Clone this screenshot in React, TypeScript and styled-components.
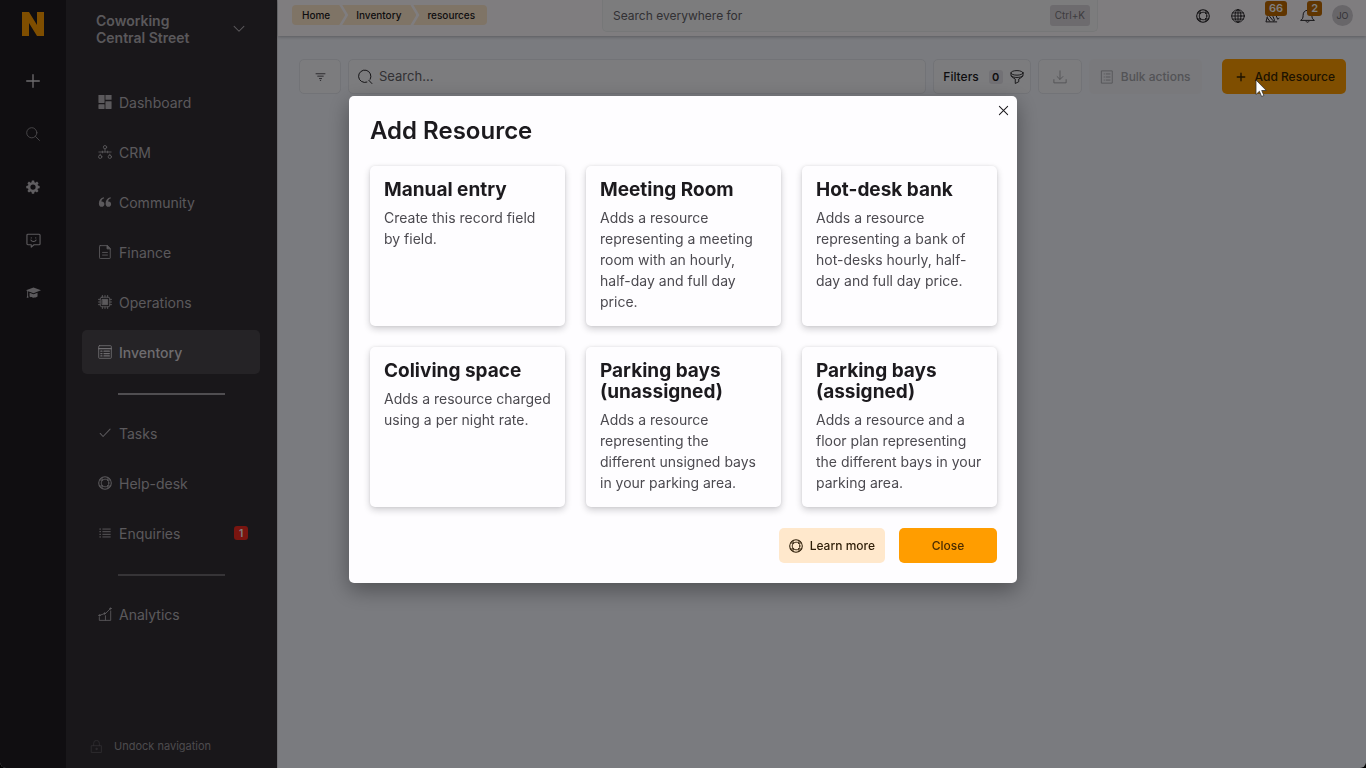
import React from "react";
import styled, { createGlobalStyle } from "styled-components";

const GlobalStyle = createGlobalStyle`
  *, *::before, *::after { box-sizing: border-box; }
  body {
    margin: 0;
    background: #000;
    color: #1c1a1e;
    font-family: Inter, "Liberation Sans", sans-serif;
    font-size: 14px;
    line-height: 21px;
  }
  button, input { font: inherit; color: inherit; }
  button { cursor: pointer; border: 0; background: none; padding: 0; }
  a { color: inherit; text-decoration: none; }
  ul, ol { list-style: none; margin: 0; padding: 0; }
  h1, h2, p { margin: 0; }
`;

/* ---------- icons ---------- */

const Svg = styled.svg<{ $size?: number }>`
  display: block;
  flex: none;
  width: ${(p) => p.$size ?? 14}px;
  height: ${(p) => p.$size ?? 14}px;
  fill: none;
  stroke: currentColor;
  stroke-width: 1;
  stroke-linecap: round;
  stroke-linejoin: round;
`;

type IconProps = { size?: number };

const icon = (children: React.ReactNode, defaultSize = 14) =>
  function Icon({ size = defaultSize }: IconProps) {
    return (
      <Svg viewBox="0 0 16 16" $size={size} aria-hidden="true">
        {children}
      </Svg>
    );
  };

const PlusIcon = icon(<path d="M8 .8v14.4M.8 8h14.4" strokeWidth="1.5" />);
const SearchIcon = icon(
  <>
    <circle cx="6.6" cy="6.6" r="5.8" />
    <path d="M10.8 10.8l4.6 4.6" />
  </>
);
const GearIcon = icon(
  <path
    fill="currentColor"
    stroke="none"
    fillRule="evenodd"
    d="M6.7.5h2.6l.4 2 1.1.5 1.8-1.2 1.8 1.8L13.200 5.300l.5 1.100 1.900.400v2.500l-2 .4-.5 1.100 1.200 1.800-1.800 1.800-1.700-1.200-1.100.5-.4 1.900H6.700l-.4-1.900-1.100-.5-1.800 1.200-1.800-1.800 1.200-1.800-.5-1.100-2-.4V6.800l2-.4.5-1.100L1.600 3.600l1.800-1.800L5.200 3l1.100-.5zM8 5a3 3 0 1 0 0 6 3 3 0 0 0 0-6z"
  />
);
const FeedbackIcon = icon(
  <>
    <path d="M2 1.300h12a1 1 0 0 1 1 1v9.200a1 1 0 0 1-1 1H8.500L5.600 15v-2.500H2a1 1 0 0 1-1-1V2.300a1 1 0 0 1 1-1z" strokeWidth="1.200" />
    <path d="M5.300 7.600c.9 1.900 4.500 1.900 5.400 0M5.600 5v.3M10.400 5v.3" strokeWidth="1.200" />
  </>,
  15
);
const CapIcon = icon(
  <>
    <path fill="currentColor" stroke="none" d="M8 1.500l8 3-8 3.200L2.200 5.600v4.600l.5 2.300H.7l.6-2.300V5.100L0 4.500z" />
    <path fill="currentColor" stroke="none" d="M3.800 7.200L8 8.800l4.300-1.700v4.200c-2.300 1.700-6.300 1.700-8.500 0z" />
  </>,
  15
);
const ChevronIcon = icon(<path d="M1.500 4.500L8 11l6.500-6.500" strokeWidth="1.400" />, 12);
const DashboardIcon = icon(
  <g fill="currentColor" stroke="none">
    <rect x="0.500" y="0" width="7" height="9" rx=".5" />
    <rect x="8.500" y="0" width="7" height="5.500" rx=".5" />
    <rect x="0.500" y="10.500" width="7" height="5.500" rx=".5" />
    <rect x="8.500" y="7" width="7" height="9" rx=".5" />
  </g>
);
const CrmIcon = icon(
  <>
    <circle cx="8" cy="2.500" r="1.900" />
    <circle cx="2.500" cy="13.500" r="1.900" />
    <circle cx="13.500" cy="13.500" r="1.900" />
    <path d="M8 4.500V8M1 8h14M5 7v2M11 7v2M2.500 10.500v1M13.500 10.500v1" />
  </>
);
const QuoteIcon = icon(
  <g fill="currentColor" stroke="none">
    <path d="M6.600 2.600C3 3.400 1 6.200 1 9.600 1 12 2.300 13.500 4.200 13.500S7.300 12.200 7.300 10.500 6.100 7.500 4.400 7.500h-.6C4 5.800 5 4.500 7.100 3.700z" />
    <path d="M14.300 2.600c-3.600.8-5.600 3.600-5.600 7 0 2.400 1.300 3.900 3.200 3.900s3.100-1.300 3.100-3-1.200-3-2.900-3h-.6c.2-1.700 1.200-3 3.300-3.800z" />
  </g>
);
const FinanceIcon = icon(
  <>
    <path d="M2.500.7h7.800l3.700 3.700v10.400a.6.600 0 0 1-.6.600H2.500a.8.800 0 0 1-.8-.8V1.500a.8.800 0 0 1 .8-.8zM5.200 8.500h5.600M5.200 11.500h5.600" />
    <path fill="currentColor" d="M10.300.7v3.700H14z" />
  </>
);
const ChipIcon = icon(
  <>
    <rect x="2.500" y="2.500" width="11" height="11" rx="2" />
    <rect x="5" y="5" width="6" height="6" fill="currentColor" />
    <path d="M5 .5v2M8 .5v2M11 .5v2M5 13.500v2M8 13.500v2M11 13.500v2M.5 5h2M.5 8h2M.5 11h2M13.500 5h2M13.500 8h2M13.500 11h2" />
  </>
);
const InventoryIcon = icon(
  <>
    <rect x=".8" y=".8" width="14.400" height="14.400" rx=".8" />
    <path d="M.8 4.200h14.400M3.200 7h1.400M6.800 7h6.200M3.200 9.800h1.400M6.800 9.800h6.200M3.200 12.500h1.400M6.800 12.500h6.200" strokeWidth="1.300" />
  </>
);
const CheckIcon = icon(<path d="M2.500 8.500l3.300 3.500 8-8.500" strokeWidth="1.200" />);
const LifebuoyIcon = icon(
  <>
    <circle cx="8" cy="8" r="7.200" strokeWidth="1.200" />
    <circle cx="8" cy="8" r="4.400" />
    <path d="M2.300 4.500l2.700.3M4.500 2.300l.4 2.700M13.700 4.500l-2.700.3M11.500 2.300L11.100 5M2.300 11.500l2.700-.3M4.500 13.700l.4-2.700M13.700 11.500l-2.700-.3M11.500 13.700l-.4-2.700" />
  </>
);
const ListIcon = icon(
  <path d="M2 3.500h1M5.500 3.500H14M2 6.500h1M5.500 6.500H14M2 9.500h1M5.500 9.500H14M2 12.500h1M5.500 12.500H14" strokeWidth="1.100" />
);
const AnalyticsIcon = icon(
  <>
    <path d="M1.500 12v3.300h13V4.500M1.500 9.500l5-1.500 2.500-1 5-5M8.500 10v5" />
    <g fill="currentColor">
      <circle cx="1.600" cy="9.700" r=".8" />
      <circle cx="7.500" cy="7.400" r=".8" />
      <circle cx="14.200" cy="1.800" r=".8" />
    </g>
  </>
);
const LockIcon = icon(
  <>
    <path d="M2 7h12v8.300H2zM4.500 7V4a3.500 3.500 0 0 1 7 0v3" />
    <circle cx="8" cy="11" r=".9" fill="currentColor" />
  </>
);
const GlobeIcon = icon(
  <>
    <circle cx="8" cy="8" r="7.200" />
    <ellipse cx="8" cy="8" rx="3.400" ry="7.200" />
    <path d="M8 .8v14.400M.8 8h14.400M1.700 4.500h12.600M1.700 11.500h12.600" />
  </>
);
const PartyIcon = icon(
  <path d="M2.500 9.500L1 14.800h11.500M2.500 10.500l2.500 3.500M5 9l3.500 4.500c1 .8 2 .2 1.500-1L8.500 9M12 8.500l1.500 3.500 1.500-1" />,
  15
);
const BellIcon = icon(
  <path d="M1 13c1.800-1 2.300-2.500 2.300-5.200C3.300 4.500 5.200 2.500 8 2.500s4.700 2 4.700 5.300c0 2.700.5 4.200 2.300 5.200zM8 2.500V1M6.500 14.500c.5 1 2.500 1 3 0" />,
  15
);
const SortIcon = icon(<path d="M1.500 4h13M4 7.500h8M6.500 11h3M7.700 13.700h.6" strokeWidth="1.300" />, 11);
const SearchLoopIcon = icon(
  <path d="M9.500 14A6.600 6.600 0 1 1 13 11M11.500 12l3.300 3.500" />,
  15
);
const FunnelIcon = icon(
  <>
    <ellipse cx="8" cy="3.300" rx="6.900" ry="2.600" />
    <path d="M1.100 3.500v2.500C1.100 8 4 9 6 10.300V15.400l4-2V10.300c2-1.300 4.900-2.300 4.900-4.300v-2.500M1.500 6.700c2 2.600 11 2.600 13 0" />
  </>
);
const DownloadIcon = icon(<path d="M8 1v9.500M4.700 7.500L8 10.800l3.300-3.300M1 11v3.700h14V11" />);
const SheetIcon = icon(
  <>
    <rect x="2" y="1" width="12" height="14" />
    <path d="M4.700 4.500h.3M7 4.500h4.500M4.700 8h.3M7 8h4.500M4.700 11.500h.3M7 11.500h4.500" />
  </>
);
const BoldPlusIcon = icon(<path d="M8 2v12M2 8h12" strokeWidth="2.200" />, 10);
const CloseIcon = icon(<path d="M2 2l12 12M14 2L2 14" strokeWidth="1.500" />, 11);

/* ---------- frame ---------- */

const Shell = styled.div`
  display: flex;
  min-height: 100vh;
  overflow: hidden;
  border-radius: 0 0 6px 6px;
  background: #f4f6fe;
`;

const Rail = styled.aside`
  flex: none;
  width: 66px;
  display: flex;
  flex-direction: column;
  align-items: center;
  gap: 25px;
  padding: 10px 0;
  background: #201c22;
`;

const Logo = styled.a`
  display: grid;
  place-items: center;
  height: 28px;
  margin-bottom: 4px;
`;

const RailButton = styled.button<{ $tone?: string }>`
  display: grid;
  place-items: center;
  width: 28px;
  height: 28px;
  color: ${(p) => p.$tone ?? "#b8b4ba"};
`;

const Sidebar = styled.nav`
  flex: none;
  width: 211px;
  display: flex;
  flex-direction: column;
  background: #322e34;
`;

const Location = styled.button`
  display: flex;
  align-items: center;
  justify-content: space-between;
  padding: 12px 32px 12px 30px;
  color: #b4b0b6;
  font-weight: 600;
  line-height: 17px;
  text-align: left;
`;

const Menu = styled.ul`
  display: flex;
  flex-direction: column;
  gap: 6px;
  padding: 22px 17px 0 16px;
`;

const MenuLink = styled.a<{ $active?: boolean }>`
  display: flex;
  align-items: center;
  gap: 7px;
  height: 44px;
  padding: 0 12px 0 16px;
  border-radius: 5px;
  font-weight: ${(p) => (p.$active ? 500 : 400)};
  color: ${(p) => (p.$active ? "#dcd8de" : "#b6b2b8")};
  background: ${(p) => (p.$active ? "#4a464c" : "transparent")};
`;

const Count = styled.span`
  margin-left: auto;
  min-width: 14px;
  border-radius: 3px;
  background: #f22a20;
  color: #fff;
  font-size: 10px;
  font-weight: 600;
  line-height: 14px;
  text-align: center;
`;

const Divider = styled.li<{ $strong?: boolean }>`
  height: 25px;
  padding: 13px 35px 10px 36px;

  &::before {
    content: "";
    display: block;
    height: 2px;
    background: ${(p) => (p.$strong ? "#a09ca2" : "#6c686e")};
  }
`;

const Undock = styled.button`
  display: flex;
  align-items: center;
  gap: 11px;
  margin-top: auto;
  padding: 11px 24px;
  color: #9a969c;
  font-size: 11px;

  svg { color: #605c62; }
`;

const Main = styled.main`
  flex: 1;
  min-width: 0;
  border-left: 1px solid #dcdce2;
`;

const Header = styled.header`
  display: grid;
  grid-template-columns: 324px minmax(0, 1fr) 268px;
  align-items: start;
  height: 36px;
  background: #fffaff;
  box-shadow: 0 1px 3px rgba(0, 0, 0, 0.25);
`;

const Crumbs = styled.ol`
  display: flex;
  padding: 5px 0 0 14px;
  font-size: 10px;
  font-weight: 500;
  line-height: 20px;
`;

const Crumb = styled.li<{ $place: "first" | "middle" | "last" }>`
  padding: 0 ${(p) => (p.$place === "last" ? 12 : 15)}px 0 ${(p) => (p.$place === "first" ? 10 : 14)}px;
  margin-left: ${(p) => (p.$place === "first" ? 0 : -3)}px;
  border-radius: ${(p) => ({ first: "4px 0 0 4px", middle: "0", last: "0 4px 4px 0" })[p.$place]};
  background: #ffe8cc;
  clip-path: ${(p) =>
    ({
      first: "polygon(0 0, calc(100% - 6px) 0, 100% 50%, calc(100% - 6px) 100%, 0 100%)",
      middle: "polygon(0 0, calc(100% - 6px) 0, 100% 50%, calc(100% - 6px) 100%, 0 100%, 6px 50%)",
      last: "polygon(0 0, 100% 0, 100% 100%, 0 100%, 6px 50%)",
    })[p.$place]};
`;

const GlobalSearch = styled.label`
  display: flex;
  align-items: center;
  height: 32px;
  padding: 0 7px 0 10px;
  border: 1px solid #eceff0;
  border-top: 0;
  border-radius: 0 0 5px 5px;
  background: #f9f9fb;
  font-size: 12px;
`;

const BareInput = styled.input`
  flex: 1;
  min-width: 0;
  border: 0;
  padding: 0;
  background: none;
  outline: 0;

  &::placeholder { color: #646268; opacity: 1; }
`;

const Kbd = styled.kbd`
  padding: 0 5px;
  border-radius: 3px;
  background: #dad6dc;
  color: #7c787e;
  font-family: inherit;
  font-size: 10px;
  line-height: 21px;
`;

const HeaderActions = styled.div`
  display: flex;
  align-items: center;
  justify-content: flex-end;
  gap: 14px;
  height: 31px;
  padding-right: 13px;
`;

const HeaderButton = styled.button`
  position: relative;
  display: grid;
  place-items: center;
  width: 21px;
  height: 21px;
`;

const Notice = styled.span`
  position: absolute;
  right: -4px;
  bottom: 10px;
  padding: 0 4px;
  border-radius: 3px;
  background: #c06a00;
  color: #fff;
  font-size: 11px;
  font-weight: 600;
  line-height: 15px;
`;

const Avatar = styled.button`
  width: 21px;
  height: 21px;
  border-radius: 50%;
  background: #d0cdd3;
  color: #67656b;
  font-size: 9px;
`;

const Toolbar = styled.div`
  display: flex;
  align-items: stretch;
  gap: 7px;
  padding: 23px 20px 0 21px;
  font-size: 12px;
`;

const Box = styled.div`
  display: flex;
  align-items: center;
  justify-content: center;
  height: 35px;
  border: 1px solid #e4e6ee;
  border-radius: 5px;
  background: #f9f9fd;
`;

const IconBox = styled(Box).attrs({ as: "button" })<{ $faded?: boolean }>`
  width: ${(p) => (p.$faded ? 44 : 42)}px;
  color: ${(p) => (p.$faded ? "#a0a0a6" : "#44424a")};
`;

const SearchBox = styled(Box).attrs({ as: "label" })`
  flex: 1;
  gap: 6px;
  padding: 0 9px;
  font-size: 13px;
`;

const FilterBox = styled(Box).attrs({ as: "button" })`
  padding: 0 6px 0 9px;
  font-weight: 500;
`;

const FilterCount = styled.span`
  min-width: 14px;
  margin: 0 7px 0 10px;
  border-radius: 3px;
  background: #e4e2ea;
  font-size: 11px;
  font-weight: 600;
  line-height: 14px;
  text-align: center;
`;

const BulkBox = styled(Box).attrs({ as: "button" })`
  gap: 7px;
  padding: 0 10px;
  border-color: transparent;
  background: #f2f3f9;
  color: #a6a6ac;
  font-weight: 500;
`;

const AddBox = styled(Box).attrs({ as: "button" })`
  gap: 9px;
  margin-left: 13px;
  padding: 0 11px 0 14px;
  border: 0;
  background: #ff9d00;
  color: #3a2500;
  font-weight: 500;
`;

/* ---------- dialog ---------- */

const Backdrop = styled.div`
  position: fixed;
  inset: 0;
  padding: 96px 20px 20px;
  background: rgba(0, 0, 0, 0.5);
`;

const Dialog = styled.section`
  position: relative;
  max-width: 668px;
  margin: 0 auto;
  padding: 21px 20px 20px 21px;
  border-radius: 5px;
  background: #fefdff;
  box-shadow: 0 7px 21px rgba(0, 0, 0, 0.35);
`;

const DialogClose = styled.button`
  position: absolute;
  top: 5px;
  right: 5px;
  display: grid;
  place-items: center;
  width: 18px;
  height: 18px;
`;

const DialogTitle = styled.h2`
  font-size: 24px;
  font-weight: 600;
  line-height: 28px;
`;

const Cards = styled.div`
  display: grid;
  grid-template-columns: repeat(3, minmax(0, 1fr));
  gap: 21px;
  margin: 21px 0;
`;

const Card = styled.button`
  display: flex;
  flex-direction: column;
  gap: 7px;
  min-height: 160px;
  padding: 13px 14px;
  border-radius: 5px;
  background: #fefdff;
  box-shadow: 0 3px 7px rgba(20, 20, 30, 0.2), 0 0 3px rgba(20, 20, 30, 0.08);
  text-align: left;
`;

const CardTitle = styled.strong`
  font-size: 19px;
  font-weight: 700;
`;

const CardText = styled.span`
  color: #4c4a50;
`;

const DialogFooter = styled.footer`
  display: flex;
  justify-content: flex-end;
  gap: 14px;
`;

const Action = styled.button<{ $primary?: boolean }>`
  display: flex;
  align-items: center;
  justify-content: center;
  gap: 7px;
  height: 35px;
  padding: 0 10px;
  min-width: 98px;
  border-radius: 5px;
  background: ${(p) => (p.$primary ? "#ff9d00" : "#ffe8cc")};
  color: ${(p) => (p.$primary ? "#4a2c00" : "#2c1c06")};
  font-size: 12px;
  font-weight: 500;
`;

const Pointer = styled.svg`
  position: fixed;
  left: 1255px;
  top: 79px;
  width: 12px;
  height: 19px;
`;

const railItems = [
  { label: "Create", Icon: PlusIcon, tone: "#dcd8de" },
  { label: "Search", Icon: SearchIcon, tone: "#9a969c" },
  { label: "Settings", Icon: GearIcon, tone: "#c0bcc2" },
  { label: "Feedback", Icon: FeedbackIcon },
  { label: "Academy", Icon: CapIcon },
];

type MenuItem = { label: string; Icon: React.FC<IconProps>; active?: boolean; count?: number };

const menuGroups: MenuItem[][] = [
  [
    { label: "Dashboard", Icon: DashboardIcon },
    { label: "CRM", Icon: CrmIcon },
    { label: "Community", Icon: QuoteIcon },
    { label: "Finance", Icon: FinanceIcon },
    { label: "Operations", Icon: ChipIcon },
    { label: "Inventory", Icon: InventoryIcon, active: true },
  ],
  [
    { label: "Tasks", Icon: CheckIcon },
    { label: "Help-desk", Icon: LifebuoyIcon },
    { label: "Enquiries", Icon: ListIcon, count: 1 },
  ],
  [{ label: "Analytics", Icon: AnalyticsIcon }],
];

const presets = [
  { title: "Manual entry", text: "Create this record field by field." },
  {
    title: "Meeting Room",
    text: "Adds a resource representing a meeting room with an hourly, half-day and full day price.",
  },
  {
    title: "Hot-desk bank",
    text: "Adds a resource representing a bank of hot-desks hourly, half-day and full day price.",
  },
  { title: "Coliving space", text: "Adds a resource charged using a per night rate." },
  {
    title: "Parking bays (unassigned)",
    text: "Adds a resource representing the different unsigned bays in your parking area.",
  },
  {
    title: "Parking bays (assigned)",
    text: "Adds a resource and a floor plan representing the different bays in your parking area.",
  },
];

export default function App() {
  return (
    <>
      <GlobalStyle />
      <Shell>
        <Rail>
          <Logo href="#" aria-label="Home">
            <svg width="22" height="24" viewBox="0 0 22 24" aria-hidden="true">
              <path fill="#ff9d00" d="M0 0h7l8 13V0h7v24h-7L7 11v13H0z" />
            </svg>
          </Logo>
          {railItems.map(({ label, Icon, tone }) => (
            <RailButton key={label} aria-label={label} $tone={tone}>
              <Icon />
            </RailButton>
          ))}
        </Rail>

        <Sidebar aria-label="Main">
          <Location>
            <span>
              Coworking
              <br />
              Central Street
            </span>
            <ChevronIcon />
          </Location>
          <Menu>
            {menuGroups.map((group, index) => (
              <React.Fragment key={index}>
                {index > 0 && <Divider role="separator" $strong={index === 1} />}
                {group.map(({ label, Icon, active, count }) => (
                  <li key={label}>
                    <MenuLink href="#" $active={active}>
                      <Icon />
                      {label}
                      {count && <Count>{count}</Count>}
                    </MenuLink>
                  </li>
                ))}
              </React.Fragment>
            ))}
          </Menu>
          <Undock>
            <LockIcon size={13} />
            Undock navigation
          </Undock>
        </Sidebar>

        <Main>
          <Header>
            <Crumbs>
              <Crumb $place="first"><a href="#">Home</a></Crumb>
              <Crumb $place="middle"><a href="#">Inventory</a></Crumb>
              <Crumb $place="last"><a href="#">resources</a></Crumb>
            </Crumbs>
            <GlobalSearch>
              <BareInput aria-label="Search everywhere" placeholder="Search everywhere for" />
              <Kbd>Ctrl+K</Kbd>
            </GlobalSearch>
            <HeaderActions>
              <HeaderButton aria-label="Help"><LifebuoyIcon /></HeaderButton>
              <HeaderButton aria-label="Language"><GlobeIcon /></HeaderButton>
              <HeaderButton aria-label="News"><PartyIcon /><Notice>66</Notice></HeaderButton>
              <HeaderButton aria-label="Notifications"><BellIcon /><Notice>2</Notice></HeaderButton>
              <Avatar>JO</Avatar>
            </HeaderActions>
          </Header>

          <Toolbar>
            <IconBox aria-label="Sort"><SortIcon /></IconBox>
            <SearchBox>
              <SearchLoopIcon />
              <BareInput aria-label="Search" placeholder="Search..." />
            </SearchBox>
            <FilterBox>
              Filters
              <FilterCount>0</FilterCount>
              <FunnelIcon />
            </FilterBox>
            <IconBox aria-label="Download" $faded><DownloadIcon /></IconBox>
            <BulkBox><SheetIcon />Bulk actions</BulkBox>
            <AddBox><BoldPlusIcon />Add Resource</AddBox>
          </Toolbar>
        </Main>
      </Shell>

      <Backdrop>
        <Dialog role="dialog" aria-modal="true" aria-labelledby="dialog-title">
          <DialogTitle id="dialog-title">Add Resource</DialogTitle>
          <DialogClose aria-label="Dismiss"><CloseIcon /></DialogClose>
          <Cards>
            {presets.map(({ title, text }) => (
              <Card key={title}>
                <CardTitle>{title}</CardTitle>
                <CardText>{text}</CardText>
              </Card>
            ))}
          </Cards>
          <DialogFooter>
            <Action><LifebuoyIcon />Learn more</Action>
            <Action $primary>Close</Action>
          </DialogFooter>
        </Dialog>
      </Backdrop>

      <Pointer viewBox="0 0 12 19" aria-hidden="true">
        <path d="M1 1v14.500l3.400-3.200 2.200 5.200 2.300-1-2.200-5h4.600z" fill="#fff" stroke="#333" strokeWidth=".8" />
      </Pointer>
    </>
  );
}
